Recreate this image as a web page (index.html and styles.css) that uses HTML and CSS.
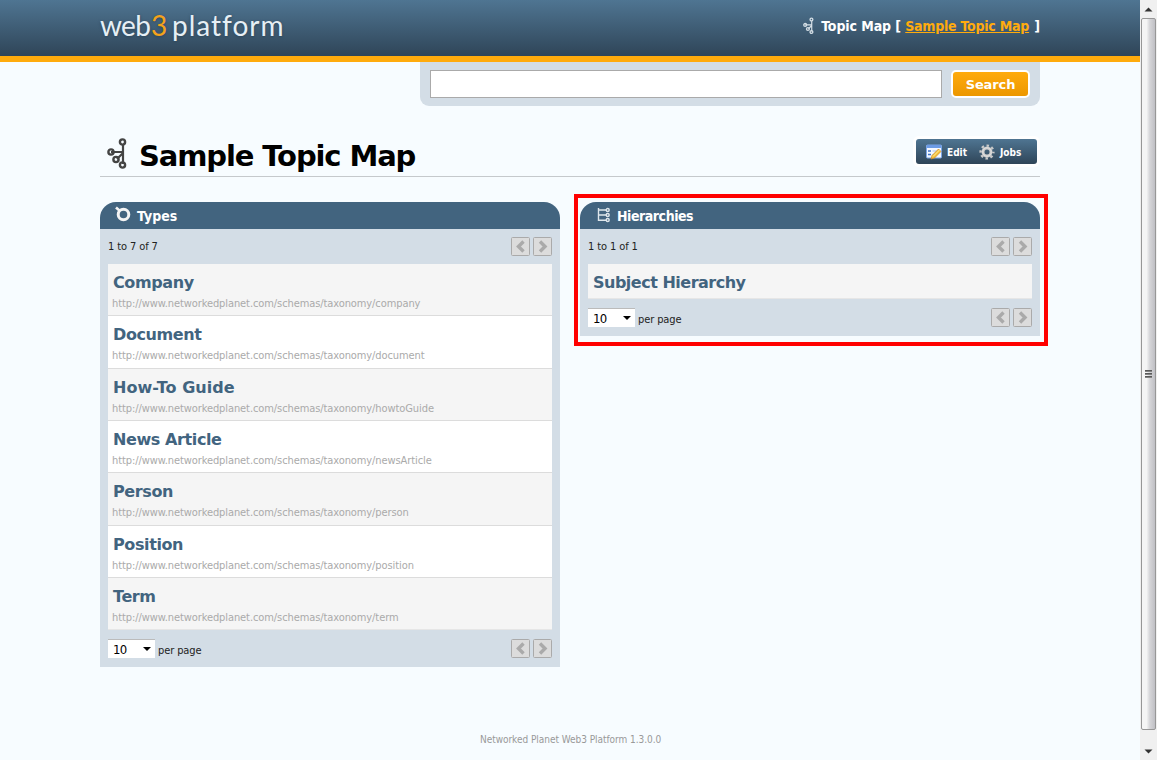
FILE: index.html
```html
<!DOCTYPE html>
<html lang="en">
<head>
<meta charset="utf-8">
<title>Sample Topic Map</title>
<link rel="stylesheet" href="styles.css">
</head>
<body>
<svg class="defs" width="0" height="0">
  <defs>
    <symbol id="topicmap" viewBox="0 0 22 32">
      <path d="M16 7V26M4 14H16M10 21L16 15" fill="none" stroke="currentColor" stroke-width="2.2"/>
      <g fill="none" stroke="currentColor" stroke-width="2.4"><circle cx="15.500" cy="4" r="2.600"/><circle cx="4" cy="14" r="2.600"/><circle cx="9" cy="21.500" r="2.600"/><circle cx="15.500" cy="27" r="2.600"/></g>
    </symbol>
    <symbol id="prev" viewBox="0 0 19 19"><rect x=".5" y=".5" width="18" height="18" rx="1" fill="#dcdcdc" stroke="#aaa"/><path d="M12.500 4.500L7.500 9.500L12.500 14.500" fill="none" stroke="#aaa" stroke-width="3.400"/></symbol>
    <symbol id="next" viewBox="0 0 19 19"><rect x=".5" y=".5" width="18" height="18" rx="1" fill="#dcdcdc" stroke="#aaa"/><path d="M7 4.500L12 9.500L7 14.500" fill="none" stroke="#aaa" stroke-width="3.400"/></symbol>
  </defs>
</svg>
<div class="window">
  <div class="page">
    <header class="banner">
      <div class="wrap banner-row">
        <div class="logo"><span class="web">web</span><span class="three">3</span><span class="platform">platform</span></div>
        <div class="crumb">
          <svg class="crumb-icon"><use href="#topicmap"/></svg>
          <span class="crumb-label">Topic Map [</span><a class="crumb-link">Sample Topic Map</a><span>]</span>
        </div>
      </div>
    </header>
    <div class="wrap">
      <div class="search"><input class="search-input" type="text" aria-label="Search"><button class="search-button">Search</button></div>
      <div class="heading">
        <svg class="heading-icon"><use href="#topicmap"/></svg>
        <h1>Sample Topic Map</h1>
        <div class="actions">
          <svg class="edit-icon" viewBox="0 0 16 16"><rect x=".5" y="1" width="15" height="13" rx="1" fill="#f4f8ff" stroke="#7ba6e6"/><path d="M1 2.500h14" stroke="#6c9be4" stroke-width="3"/><path d="M2 7h3M2 10.500h3" stroke="#3f73c8" stroke-width="1.500"/><path d="M6.500 7h4M6.500 10.500h3" stroke="#a9c1e8"/><path d="M6 11.500L12.500 5l2.500 2.500L8.500 14 5 15z" fill="#f7c13a" stroke="#c78525" stroke-width=".7"/><path d="M7 12.500L13.500 6" stroke="#fff0a0"/></svg>
          <span class="edit-label">Edit</span>
          <svg class="gear" viewBox="0 0 16 16"><g fill="none" stroke="#c9c9c9"><circle cx="8" cy="8" r="4" stroke-width="3"/><circle cx="8" cy="8" r="6.400" stroke-width="2.400" stroke-dasharray="2.500 2.526" stroke-dashoffset="1.250"/></g><circle cx="8" cy="8" r="4.200" fill="none" stroke="#e4e4e4"/></svg>
          <span>Jobs</span>
        </div>
      </div>
      <main class="columns">
        <section class="panel">
          <h2><svg class="type-icon" viewBox="0 0 16 16"><circle cx="8.500" cy="8.500" r="5.300" fill="none" stroke="#f4f4f4" stroke-width="3"/><path d="M1 1.500L5 5" stroke="#f4f4f4" stroke-width="2.600"/></svg><span>Types</span></h2>
          <div class="pager top"><span class="range">1 to 7 of 7</span><svg><use href="#prev"/></svg><svg><use href="#next"/></svg></div>
          <div class="list">
            <div class="item"><h3>Company</h3><p>http://www.networkedplanet.com/schemas/taxonomy/company</p></div>
            <div class="item"><h3>Document</h3><p>http://www.networkedplanet.com/schemas/taxonomy/document</p></div>
            <div class="item"><h3 class="loose">How-To Guide</h3><p>http://www.networkedplanet.com/schemas/taxonomy/howtoGuide</p></div>
            <div class="item"><h3>News Article</h3><p>http://www.networkedplanet.com/schemas/taxonomy/newsArticle</p></div>
            <div class="item"><h3>Person</h3><p>http://www.networkedplanet.com/schemas/taxonomy/person</p></div>
            <div class="item"><h3>Position</h3><p>http://www.networkedplanet.com/schemas/taxonomy/position</p></div>
            <div class="item"><h3>Term</h3><p>http://www.networkedplanet.com/schemas/taxonomy/term</p></div>
          </div>
          <div class="pager bottom"><span class="select">10<i></i></span><span class="range">per page</span><svg><use href="#prev"/></svg><svg><use href="#next"/></svg></div>
        </section>
        <div class="callout">
          <section class="panel">
            <h2 class="tight"><svg class="tree-icon" viewBox="0 0 16 16"><g fill="none" stroke="#dfe7ec" stroke-width="1.400"><path d="M2.500 1V14M2.500 3H10M2.500 8H10M2.500 13.300H10"/><circle cx="11.700" cy="3" r="1.500"/><circle cx="11.700" cy="8" r="1.500"/><circle cx="11.700" cy="13" r="1.500"/></g></svg><span>Hierarchies</span></h2>
            <div class="pager top"><span class="range">1 to 1 of 1</span><svg><use href="#prev"/></svg><svg><use href="#next"/></svg></div>
            <div class="list"><div class="item single"><h3>Subject Hierarchy</h3></div></div>
            <div class="pager bottom"><span class="select">10<i></i></span><span class="range">per page</span><svg><use href="#prev"/></svg><svg><use href="#next"/></svg></div>
          </section>
        </div>
      </main>
    </div>
    <footer>Networked Planet Web3 Platform 1.3.0.0</footer>
  </div>
  <div class="scrollbar">
    <svg class="arrow" viewBox="0 0 17 17"><path d="M8.500 7l4 4h-8z" fill="#333"/></svg>
    <div class="thumb"><i></i><i></i><i></i></div>
    <svg class="arrow" viewBox="0 0 17 17"><path d="M4.500 7h8l-4 4z" fill="#333"/></svg>
  </div>
</div>
</body>
</html>
```
FILE: styles.css
```css
* { box-sizing: border-box; }
body { margin: 0; font-family: "DejaVu Sans Condensed", "DejaVu Sans", sans-serif; font-size: 11px; color: #222; }
h1, h2, h3, p { margin: 0; }
svg { display: block; flex: none; }
.defs { position: absolute; }
.window { display: flex; width: 1157px; height: 760px; overflow: hidden; }
.page { width: 1140px; height: 760px; background: #f7fcff; display: flex; flex-direction: column; white-space: nowrap; }
.wrap { width: 940px; margin: 0 100px; }

.banner { height: 62px; border-bottom: 6px solid #ffab0d; background: linear-gradient(#4f7592, #2f4558); }
.banner-row { display: flex; justify-content: space-between; height: 52px; align-items: center; }
.logo { display: flex; margin-top: -3px; font: 400 28px/36px Lato, sans-serif; color: #e6eff5; text-shadow: 0 1px 3px #2c465a; }
.web { width: 51px; letter-spacing: -.7px; }
.three { width: 21px; color: #f5a31a; }
.platform { letter-spacing: 1px; }
.crumb { display: flex; align-items: center; font-size: 14px; font-weight: bold; color: #fff; line-height: 20px; }
.crumb-icon { width: 12px; height: 18px; color: #d5dfe6; margin-right: 6px; }
.crumb-label { width: 84px; letter-spacing: -.1px; }
.crumb-link { width: 129px; color: #ffab0d; text-decoration: underline; letter-spacing: -.23px; }

.search { display: flex; width: 620px; height: 44px; margin-left: 320px; padding: 8px 10px; background: #d3dde6; border-radius: 0 0 9px 9px; }
.search-input { width: 512px; height: 28px; padding: 0; border: 1px solid #aaa; background: #fff; }
.search-button { width: 79px; height: 28px; margin-left: 9px; padding: 0; border: 2px solid #fff; border-radius: 5px; background: linear-gradient(#ffab0d, #ec9700); color: #fff; font: bold 13px "DejaVu Sans", sans-serif; letter-spacing: -.1px; }

.heading { display: flex; height: 71px; padding-top: 31px; border-bottom: 1px solid #c5c9cc; }
.heading-icon { width: 22px; height: 32px; margin: 1px 0 0 7px; color: #444; }
.heading h1 { flex: none; width: 776px; margin-left: 10px; font: bold 29px/38px "DejaVu Sans", sans-serif; color: #000; letter-spacing: -1.12px; }
.actions { display: flex; flex: none; align-items: center; width: 121px; height: 25px; margin: 2px 0 0 1px; padding-left: 10px; background: linear-gradient(#4f7592, #2f4558); border-radius: 3px; box-shadow: 0 0 0 3px #fff; color: #fff; font-size: 10px; font-weight: bold; }
.actions span { padding-top: 1px; }
.edit-icon { width: 16px; height: 16px; }
.edit-label { width: 32px; margin-left: 5px; }
.gear { width: 16px; height: 16px; margin-right: 5px; }

.columns { display: flex; align-items: flex-start; margin-top: 17px; }
.panel { flex: none; width: 460px; background: #d3dde6; border-radius: 20px 20px 0 0; }
.columns > .panel { margin-top: 8px; }
.callout { margin-left: 14px; width: 474px; height: 152px; flex: none; border: 4px solid #f00; padding: 4px 2px; }
h2 { display: flex; height: 27px; padding-left: 16px; background: #42647f; border-radius: 16px 16px 0 0; color: #fff; font-size: 14px; line-height: 28px; }
h2 svg { width: 16px; height: 16px; margin: 4px 6px 0 -1px; }
h2 .tree-icon { margin: 5px 5px 0 0; }
.tight { letter-spacing: -.45px; }
.pager { display: flex; height: 35px; padding: 0 8px; }
.pager.bottom { height: 37px; }
.pager svg { width: 19px; height: 19px; margin: 8px 0 0 3px; }
.pager.bottom svg { margin-top: 9px; }
.range { flex: 1; line-height: 35px; letter-spacing: -.1px; }
.bottom .range { margin-left: 3px; line-height: 41px; }
.select { display: flex; align-items: center; justify-content: space-between; width: 47px; height: 19px; margin-top: 9px; padding: 0 4px 0 5px; background: #fff; border-top: 1px solid #bbb; color: #000; font-size: 13px; letter-spacing: -.7px; }
.select i { border: 4px solid transparent; border-top-color: #000; border-bottom: 0; }

.list { margin: 0 8px; }
.item { height: 52.35px; padding: 9px 4px 0; background: #fff; border-bottom: 1px solid #dcdcdc; }
.item:nth-child(odd) { background: #f5f5f5; }
.item:last-child { border-color: #e6e6e6; }
.item.single { height: 35px; }
h3 { margin-left: 1px; font: bold 16px/19px "DejaVu Sans", sans-serif; color: #42647f; letter-spacing: -.4px; }
h3.loose { letter-spacing: .05px; }
.single h3 { letter-spacing: -.5px; }
.item p { margin-top: 5px; font-size: 11px; line-height: 14px; color: #aaa; letter-spacing: -.09px; }

footer { margin-top: auto; height: 27px; padding-left: 480px; font-size: 10px; line-height: 13px; color: #999; letter-spacing: -.04px; }

.scrollbar { display: flex; flex-direction: column; width: 17px; background: #f0f0f0; }
.arrow { width: 17px; height: 18px; }
.thumb { flex: 1; width: 15px; margin-left: 1px; margin-bottom: 12px; display: flex; flex-direction: column; align-items: center; justify-content: center; gap: 1px; border: 1px solid #979797; border-radius: 2px; background: linear-gradient(90deg, #f5f5f5 35%, #d5d5d8 60%, #bfbfc4); }
.thumb i { width: 7px; height: 2px; background: linear-gradient(#444, #999); }
```
